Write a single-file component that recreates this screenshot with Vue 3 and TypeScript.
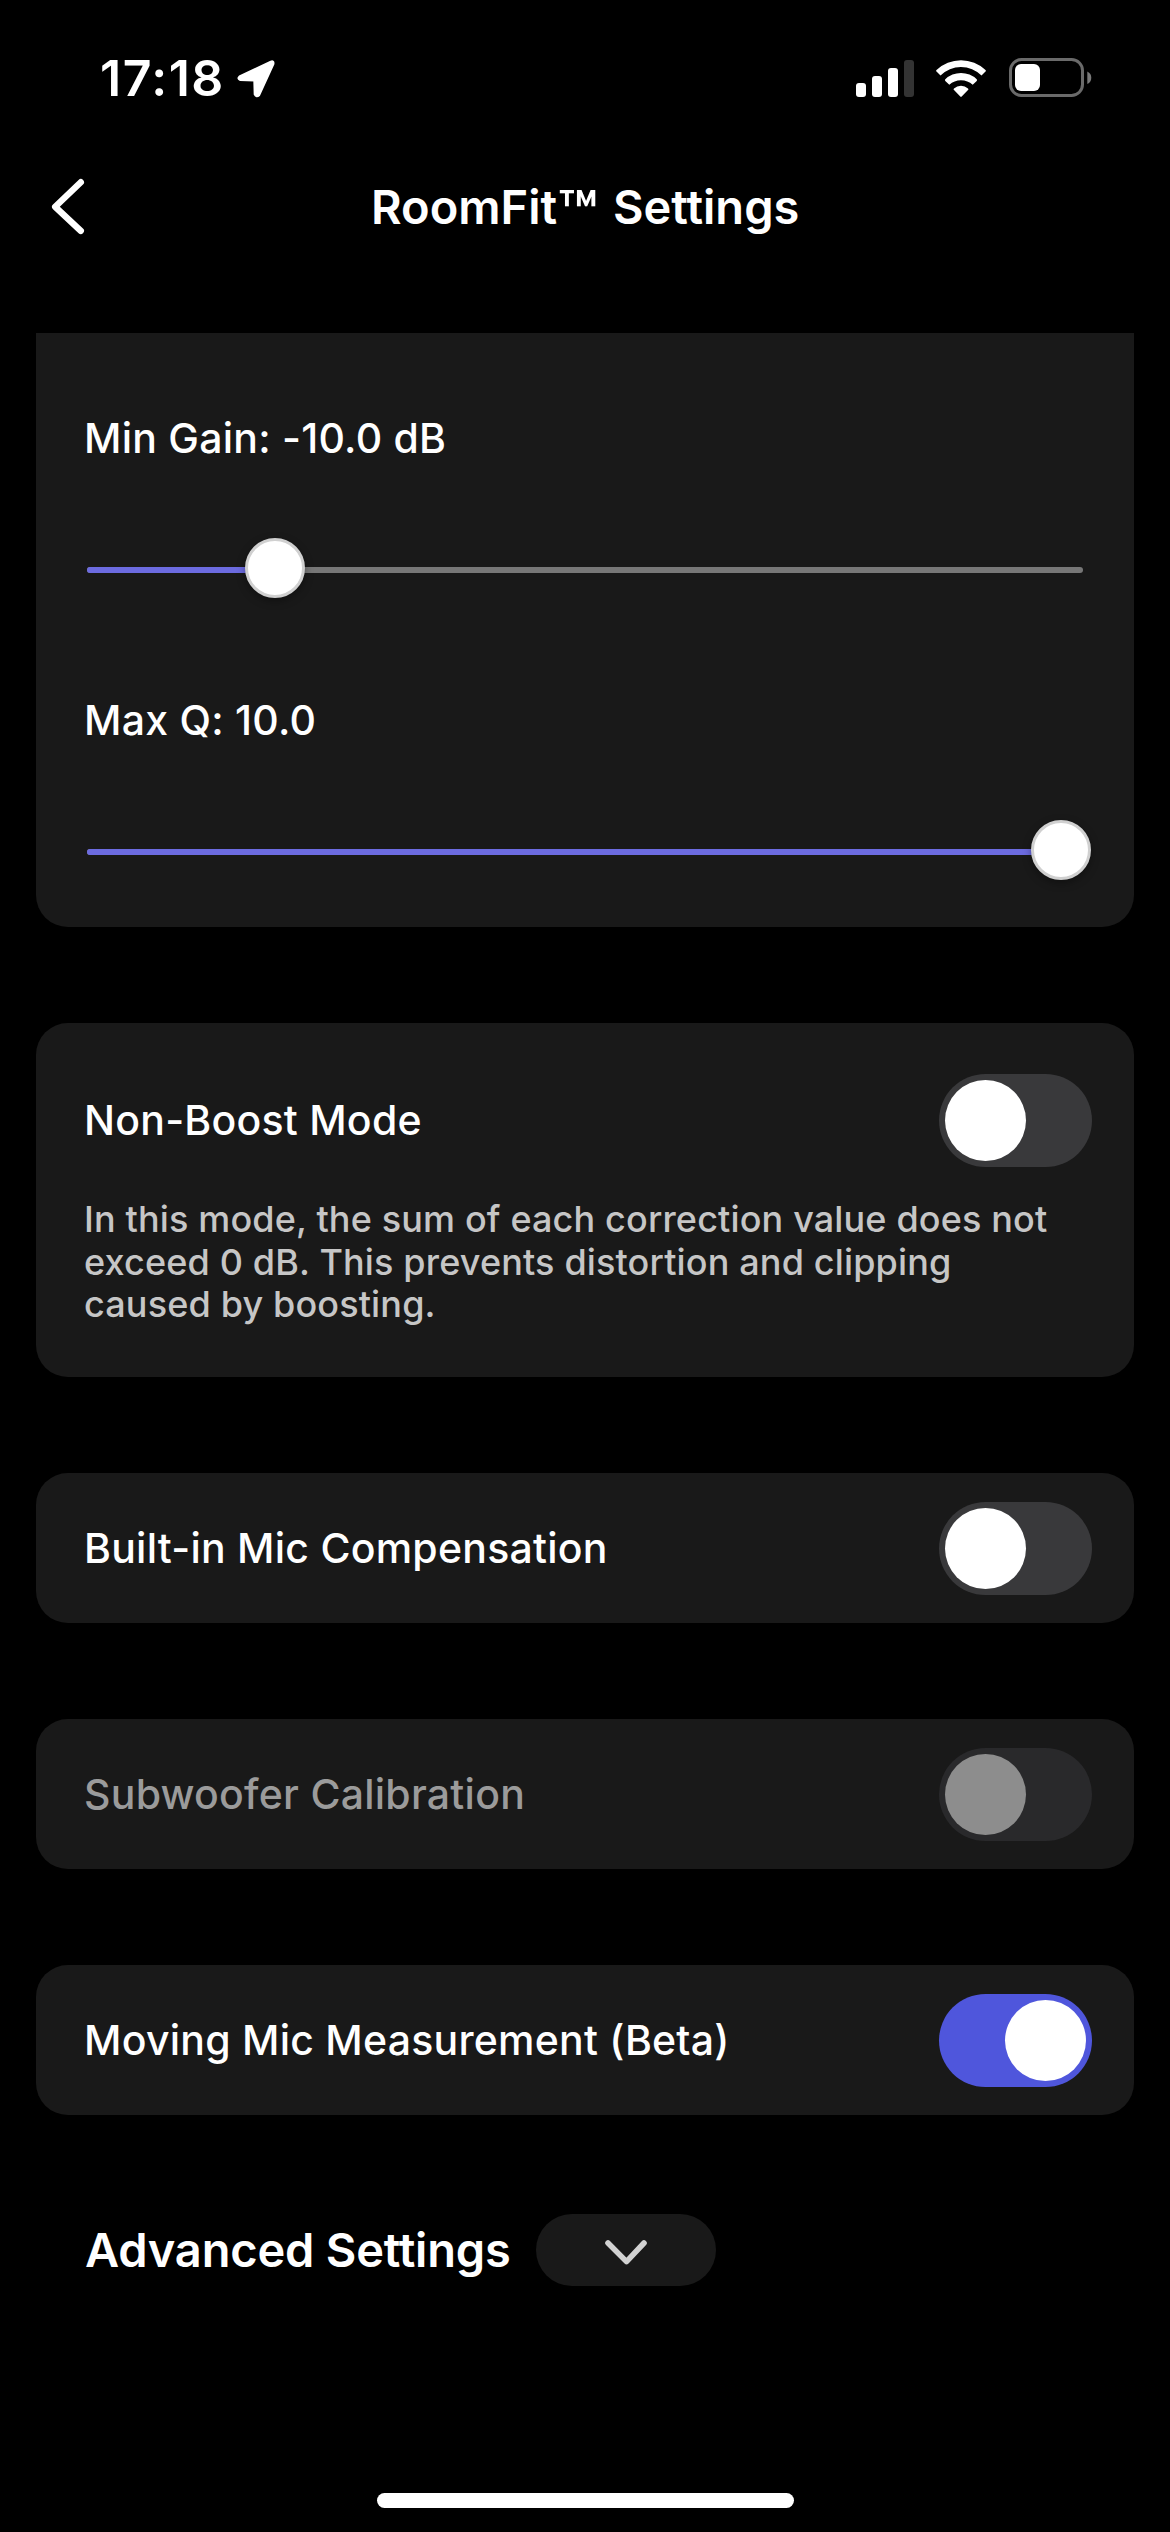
<script setup lang="ts">
interface SliderItem {
  label: string
  // Distance from the start of the track to the left edge of the thumb
  offset: number
}

interface ToggleItem {
  label: string
  on: boolean
  disabled?: boolean
  note?: string[]
}

const sliders: SliderItem[] = [
  { label: 'Min Gain: -10.0 dB', offset: 157.5 },
  { label: 'Max Q: 10.0', offset: 943.5 },
]

const toggles: ToggleItem[] = [
  {
    label: 'Non-Boost Mode',
    on: false,
    note: [
      'In this mode, the sum of each correction value does not',
      'exceed 0 dB. This prevents distortion and clipping',
      'caused by boosting.',
    ],
  },
  { label: 'Built-in Mic Compensation', on: false },
  { label: 'Subwoofer Calibration', on: false, disabled: true },
  { label: 'Moving Mic Measurement (Beta)', on: true },
]
</script>

<template>
  <div class="screen">
    <div class="status">
      <span class="time">17:18</span>
      <svg class="arrow" width="40" height="40" viewBox="0 0 40 40">
        <path d="M3.5 17.5 34.8 2.6Q38 1.6 37.4 5L23.2 36.2Q20.3 38.6 18.7 35.4L18.3 21.4 4 20.9Q1.2 19.4 3.5 17.5Z" fill="#fff" stroke="#fff" stroke-width="2" stroke-linejoin="round" />
      </svg>
      <svg class="signal" width="58" height="37" viewBox="0 0 58 37">
        <rect x="0" y="23" width="10" height="14" rx="3" fill="#fff" />
        <rect x="16" y="16" width="10" height="21" rx="3" fill="#fff" />
        <rect x="32" y="8" width="10" height="29" rx="3" fill="#fff" />
        <rect x="48" y="0" width="10" height="37" rx="3" fill="#333" />
      </svg>
      <svg class="wifi" width="50" height="37" viewBox="0 0 50 37">
        <path d="M.5 10A35.5 35.500 0 0 1 49.5 10Q50.3 10.800 49.5 11.600L45.500 15.500A29 29 0 0 0 4.500 15.500L.5 11.600Q-.3 10.800 .5 10Z" fill="#fff" />
        <path d="M9.300 19.300A22.500 22.500 0 0 1 40.700 19.300Q41.500 20.100 40.700 20.900L36.700 24.800A17 17 0 0 0 13.300 24.800L9.300 20.900Q8.500 20.100 9.300 19.300Z" fill="#fff" />
        <path d="M18 28.500A10.500 10.500 0 0 1 32 28.500Q32.800 29.300 32 30.100L25.700 36.600Q25 37.200 24.300 36.600L18 30.100Q17.200 29.300 18 28.500Z" fill="#fff" />
      </svg>
      <svg class="battery" width="83" height="40" viewBox="0 0 83 40">
        <rect x="1.5" y="1.5" width="72" height="36" rx="11" fill="none" stroke="#6a6a6a" stroke-width="3" />
        <rect x="6" y="6" width="25" height="27" rx="6" fill="#fff" />
        <path d="M78.300 13.500Q82.300 15.500 82.300 19.700 82.300 24 78.300 26Z" fill="#7a7a7a" />
      </svg>
    </div>

    <header class="header">
      <svg class="back" width="36" height="60" viewBox="0 0 36 60">
        <path d="M30.800 5.200 5.200 29.800 30.800 53.800" fill="none" stroke="#fff" stroke-width="6.400" stroke-linecap="round" stroke-linejoin="round" />
      </svg>
      <h1 class="title">RoomFit<span class="tm">™</span> Settings</h1>
    </header>

    <main class="content">
      <section class="card sliders">
        <div v-for="s in sliders" :key="s.label" class="slider-row">
          <div class="label">{{ s.label }}</div>
          <div class="slider">
            <div class="track">
              <div class="fill" :style="{ width: s.offset + 30 + 'px' }"></div>
            </div>
            <div class="thumb" :style="{ left: s.offset + 'px' }"></div>
          </div>
        </div>
      </section>

      <section
        v-for="t in toggles"
        :key="t.label"
        class="card toggle-card"
        :class="{ tall: t.note, disabled: t.disabled }"
      >
        <div class="toggle-row">
          <div class="label">{{ t.label }}</div>
          <div class="switch" :class="{ on: t.on }"><div class="knob"></div></div>
        </div>
        <div v-if="t.note" class="note">
          <div v-for="line in t.note" :key="line">{{ line }}</div>
        </div>
      </section>

      <div class="advanced">
        <h2 class="advanced-title">Advanced Settings</h2>
        <div class="pill">
          <svg width="44" height="28" viewBox="0 0 44 28">
            <path d="M4 4 22.500 22.600 40 4" fill="none" stroke="#d2d2d2" stroke-width="5.600" stroke-linecap="round" stroke-linejoin="round" />
          </svg>
        </div>
      </div>
    </main>

    <div class="home"></div>
  </div>
</template>

<style>
body {
  margin: 0;
  background: #000;
}
</style>

<style scoped>
.screen {
  display: flex;
  flex-direction: column;
  box-sizing: border-box;
  width: 1170px;
  height: 2532px;
  overflow: hidden;
  background: #000;
  color: #fff;
  font-family: Inter, 'Liberation Sans', sans-serif;
}

svg {
  display: block;
  flex: none;
}

.status {
  display: flex;
  align-items: center;
  height: 156px;
  padding: 0 78px 0 100px;
}

.time {
  width: 136px;
  font-size: 50px;
  font-weight: 600;
  line-height: 60px;
  letter-spacing: 1.49px;
}

.arrow {
  margin-top: 1px;
}

.signal {
  margin-left: auto;
}

.wifi {
  margin-left: 22px;
}

.battery {
  margin-left: 23px;
}

.header {
  display: flex;
  align-items: center;
  height: 102px;
  margin-bottom: 75px;
  padding-left: 50px;
}

.title {
  margin: 0 0 0 285px;
  font-size: 47px;
  font-weight: 600;
  line-height: 60px;
  letter-spacing: 0;
  white-space: nowrap;
}

.tm {
  display: inline-block;
  width: 44px;
  font-size: 65px;
  line-height: 0;
  vertical-align: -13px;
}

.content {
  padding: 0 36px;
}

.card {
  box-sizing: border-box;
  border-radius: 32px;
  background: #191919;
}

.label {
  font-size: 41px;
  font-weight: 500;
  line-height: 50px;
  letter-spacing: 0.24px;
  white-space: nowrap;
}

.sliders {
  display: flex;
  flex-direction: column;
  gap: 97px;
  height: 594px;
  padding: 80px 48px 0;
  border-radius: 0 0 32px 32px;
}

.slider {
  position: relative;
  display: flex;
  align-items: center;
  width: 996px;
  height: 60px;
  margin: 75px 0 0 3px;
}

.track {
  width: 100%;
  height: 6px;
  margin-top: 4px;
  border-radius: 3px;
  background: #777;
  overflow: hidden;
}

.fill {
  height: 100%;
  background: #6c6be0;
}

.thumb {
  position: absolute;
  top: 0;
  box-sizing: border-box;
  width: 60px;
  height: 60px;
  border: 3px solid #d0d0d0;
  border-radius: 50%;
  background: #fff;
  box-shadow: 0 3px 8px rgba(0, 0, 0, 0.35);
}

.toggle-card {
  height: 150px;
  margin-top: 96px;
  padding: 29px 42px 0 48px;
}

.toggle-card.tall {
  height: 354px;
  padding-top: 51px;
}

.toggle-row {
  display: flex;
  align-items: center;
  justify-content: space-between;
}

.toggle-row .label {
  padding-bottom: 1px;
}

.switch {
  display: flex;
  box-sizing: border-box;
  width: 153px;
  height: 93px;
  padding: 6px;
  border-radius: 47px;
  background: #39393b;
}

.switch.on {
  justify-content: flex-end;
  background: #4f56dc;
}

.knob {
  width: 81px;
  height: 81px;
  border-radius: 50%;
  background: #fff;
}

.disabled .label {
  color: #9b9b9b;
}

.disabled .switch {
  background: #29292b;
}

.disabled .knob {
  background: #8d8d8d;
}

.note {
  margin-top: 31px;
  color: #c6c6c6;
  font-size: 36px;
  font-weight: 500;
  line-height: 42.6px;
  letter-spacing: 0.15px;
  white-space: nowrap;
}

.advanced {
  display: flex;
  align-items: center;
  margin-top: 99px;
  padding-left: 49px;
}

.advanced-title {
  width: 451px;
  margin: 0;
  font-size: 47px;
  font-weight: 600;
  line-height: 60px;
  letter-spacing: -0.19px;
  white-space: nowrap;
}

.pill {
  display: flex;
  align-items: center;
  justify-content: center;
  width: 180px;
  height: 72px;
  border-radius: 36px;
  background: #191919;
}

.pill svg {
  margin-top: 5px;
}

.home {
  width: 417px;
  height: 15px;
  margin: auto auto 24px 377px;
  border-radius: 8px;
  background: #fff;
}
</style>
